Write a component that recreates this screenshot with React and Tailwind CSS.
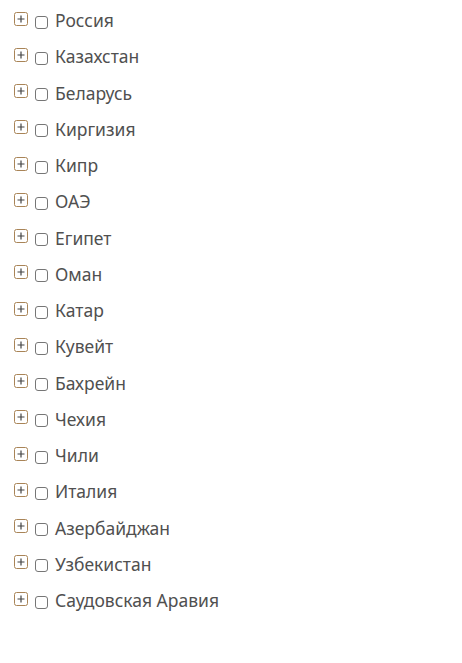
const countries = [
  "Россия",
  "Казахстан",
  "Беларусь",
  "Киргизия",
  "Кипр",
  "ОАЭ",
  "Египет",
  "Оман",
  "Катар",
  "Кувейт",
  "Бахрейн",
  "Чехия",
  "Чили",
  "Италия",
  "Азербайджан",
  "Узбекистан",
  "Саудовская Аравия",
];

function PlusIcon() {
  return (
    <svg width="14" height="14" viewBox="0 0 14 14" className="shrink-0">
      <rect x="0.5" y="0.5" width="13" height="13" rx="2" fill="#fff" stroke="#a98457" />
      <path d="M3.5 7h7M7 3.5v7" stroke="#444" strokeWidth="1.2" />
    </svg>
  );
}

export default function App() {
  return (
    <div className="w-[462px] h-[663px] bg-white pt-[2px] pl-[14px] font-['Noto_Sans',sans-serif]">
      <ul>
        {countries.map((name) => (
          <li key={name} className="flex items-center h-[36.25px]">
            <span className="-mt-[3px]">
              <PlusIcon />
            </span>
            <span className="ml-[7px] w-[13px] h-[13px] rounded-[3px] border border-[#767676] bg-white mt-[4px]" />
            <span className="ml-[7px] text-[17.5px] text-[#505050]">{name}</span>
          </li>
        ))}
      </ul>
    </div>
  );
}
